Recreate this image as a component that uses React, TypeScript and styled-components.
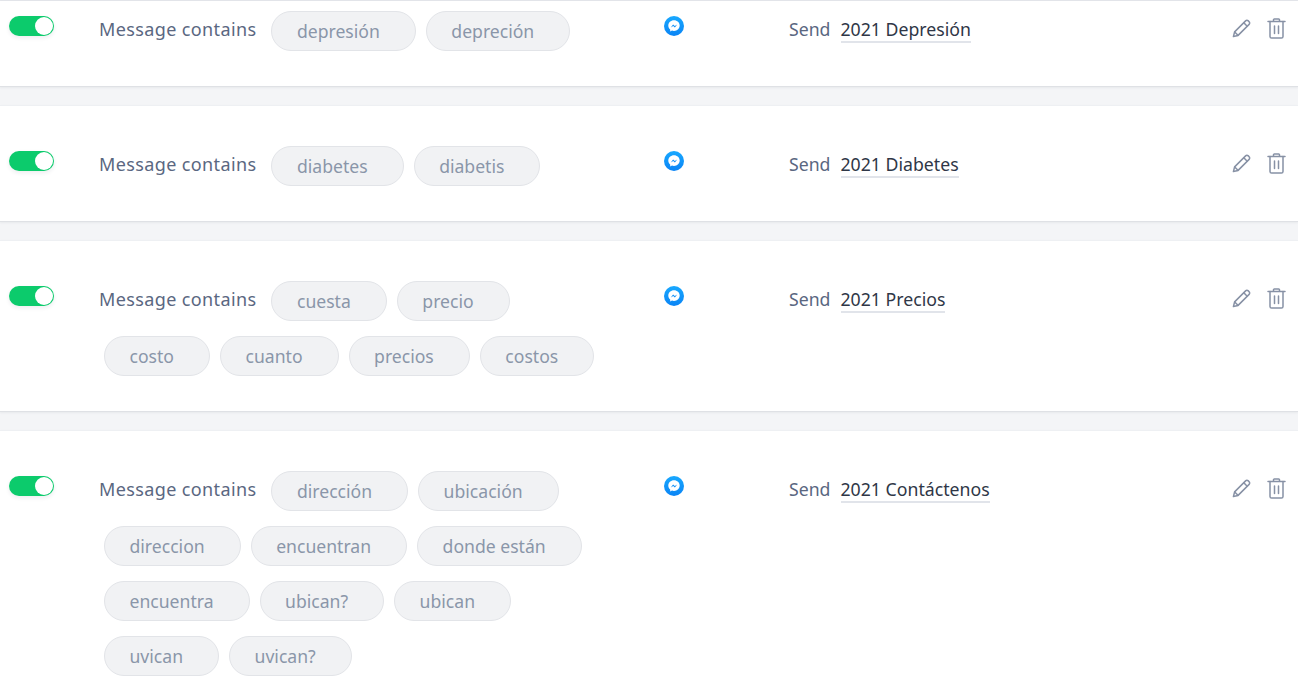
import React from "react";
import styled, { createGlobalStyle } from "styled-components";

const Global = createGlobalStyle`
  html, body { margin: 0; padding: 0; height: 689px; overflow: hidden; background: #fff; }
  body { font-family: "Noto Sans", "Open Sans", sans-serif; }
`;

const List = styled.div`
  display: flex;
  flex-direction: column;
  gap: 18px;
  background: #f4f5f7;
  border-top: 1px solid #e3e5ea;
`;

const Card = styled.div<{ $first?: boolean }>`
  display: grid;
  grid-template-columns: 90px 521px 169px 443px 1fr;
  align-items: start;
  padding: ${(p) => (p.$first ? "10px" : "40px")} 0 35px 9px;
  background: #fff;
  border-top: ${(p) => (p.$first ? "0" : "1px solid #eef0f3")};
  border-bottom: 1px solid #dfe1e5;
  box-shadow: 0 1px 2px rgba(40, 50, 70, 0.06);
`;

const Toggle = styled.div`
  position: relative;
  width: 45px;
  height: 20px;
  margin-top: 5px;
  border-radius: 10px;
  background: #0ccb6c;
  box-shadow: 0 2px 4px rgba(30, 40, 60, 0.08);
`;

const Knob = styled.span`
  position: absolute;
  top: 1px;
  right: 1px;
  width: 18px;
  height: 18px;
  border-radius: 50%;
  background: #fff;
`;

const Conditions = styled.div`
  display: flex;
  flex-wrap: wrap;
  row-gap: 15px;
  width: 521px;
`;

const Label = styled.span`
  height: 36px;
  margin-right: 10px;
  font-size: 18px;
  letter-spacing: 0.38px;
  line-height: 36px;
  color: #5a6781;
`;

const Pill = styled.span`
  box-sizing: border-box;
  height: 40px;
  margin: 0 5px;
  padding: 0 35px 0 24.5px;
  border: 1px solid #e2e4e8;
  border-radius: 20px;
  background: #f1f2f4;
  font-size: 17.6px;
  line-height: 39px;
  color: #8a96a9;
`;

const ChannelIcon = styled.svg`
  display: block;
  width: 20px;
  height: 20px;
  margin: 5px 0 0 44px;
`;

const Send = styled.div`
  display: flex;
  align-items: flex-start;
  gap: 10px;
  font-size: 17.7px;
  line-height: 36px;
  color: #5a6781;
`;

const Message = styled.span`
  height: 30px;
  border-bottom: 2px solid #e1e4ea;
  color: #2f3747;
`;

const Actions = styled.div`
  display: flex;
  gap: 14px;
  margin: 7px 0 0 -1px;
`;

const ActionIcon = styled.svg`
  display: block;
  width: 21px;
  height: 21px;
  fill: none;
  stroke: #8791a5;
  stroke-width: 1.5;
  stroke-linecap: round;
  stroke-linejoin: round;
`;

const Messenger = () => (
  <ChannelIcon viewBox="0 0 20 20">
    <defs>
      <linearGradient id="mg" x1="0.5" y1="0" x2="0.5" y2="1">
        <stop offset="0" stopColor="#18a8ff" />
        <stop offset="1" stopColor="#0a84f5" />
      </linearGradient>
    </defs>
    <circle cx="10" cy="10" r="10" fill="url(#mg)" />
    <path d="M10 4.3c-3.2 0-5.7 2.3-5.7 5.3 0 1.6.7 3 1.9 4v2l1.8-1c.6.2 1.3.3 2 .3 3.2 0 5.7-2.3 5.7-5.3S13.2 4.3 10 4.3z" fill="#fff" />
    <path d="M6.8 11.6l2.3-3 1.7 1.5 2.4-1.6-2.3 3-1.7-1.5z" fill="#0f8ff7" />
  </ChannelIcon>
);

const PencilIcon = () => (
  <ActionIcon viewBox="0 0 21 21">
    <path d="M2.4 18.6l1.2-4.7L14.6 2.9a1.9 1.9 0 0 1 2.7 0l.8.8a1.9 1.9 0 0 1 0 2.7L7.1 17.4z" />
    <path d="M12.8 4.8l3.4 3.4M3.7 14l3.3 3.3" />
  </ActionIcon>
);

const TrashIcon = () => (
  <ActionIcon viewBox="0 0 21 21">
    <path d="M2 3.5h17M7.5 3.5V1.8c0-.5.4-.8.8-.8h4.4c.4 0 .8.3.8.8v1.7" />
    <path d="M4 3.5v14.9c0 .9.7 1.6 1.6 1.6h9.8c.9 0 1.6-.7 1.6-1.6V3.5" />
    <path d="M8.5 8v7.5M12.5 8v7.5" />
  </ActionIcon>
);

type Rule = { id: string; keywords: string[]; message: string };

const rules: Rule[] = [
  { id: "a", keywords: ["depresión", "depreción"], message: "2021 Depresión" },
  { id: "b", keywords: ["diabetes", "diabetis"], message: "2021 Diabetes" },
  { id: "c", keywords: ["cuesta", "precio", "costo", "cuanto", "precios", "costos"], message: "2021 Precios" },
  {
    id: "d",
    keywords: ["dirección", "ubicación", "direccion", "encuentran", "donde están", "encuentra", "ubican?", "ubican", "uvican", "uvican?"],
    message: "2021 Contáctenos",
  },
];

export default function App() {
  return (
    <>
      <Global />
      <List>
        {rules.map((rule, index) => (
          <Card key={rule.id} $first={index === 0}>
            <Toggle>
              <Knob />
            </Toggle>
            <Conditions>
              <Label>Message contains</Label>
              {rule.keywords.map((word) => (
                <Pill key={word}>{word}</Pill>
              ))}
            </Conditions>
            <Messenger />
            <Send>
              Send <Message>{rule.message}</Message>
            </Send>
            <Actions>
              <PencilIcon />
              <TrashIcon />
            </Actions>
          </Card>
        ))}
      </List>
    </>
  );
}
